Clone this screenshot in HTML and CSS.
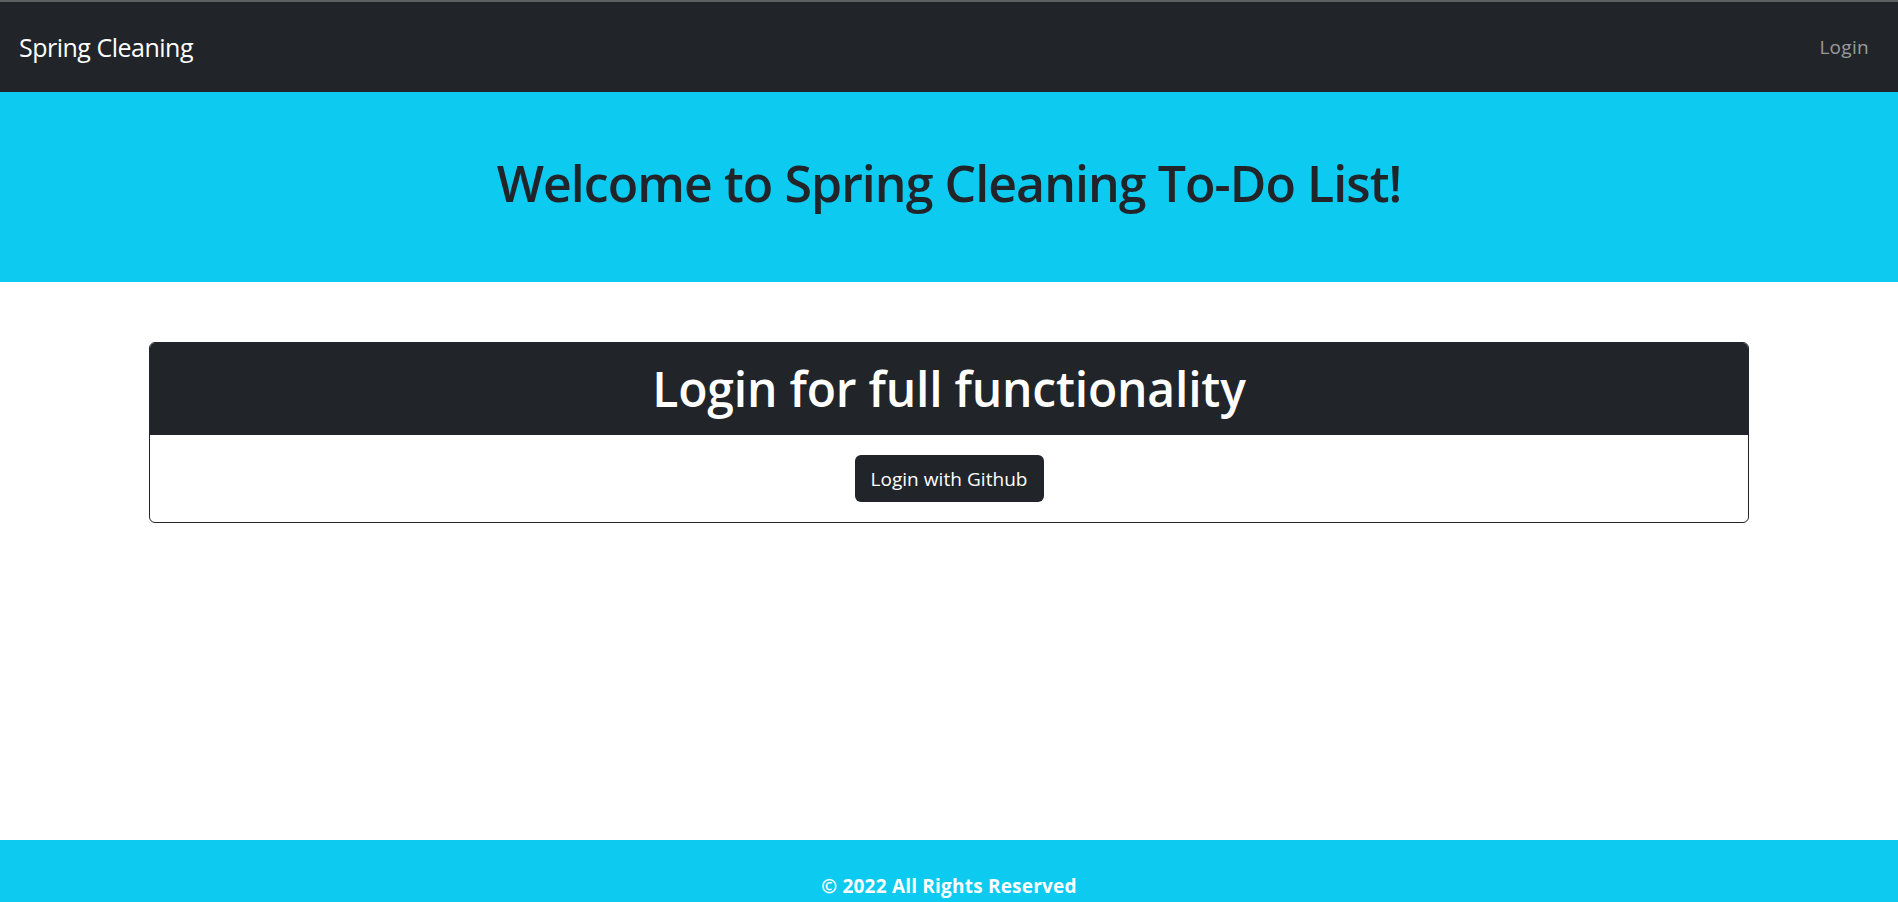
FILE: index.html
```html
<!DOCTYPE html>
<html lang="en">
<head>
<meta charset="utf-8">
<title>Spring Cleaning</title>
<link rel="stylesheet" href="styles.css">
</head>
<body>
<nav class="navbar">
  <a class="brand" href="#">Spring Cleaning</a>
  <a class="nav-link" href="#">Login</a>
</nav>
<header class="hero">
  <h1 class="hero-title">Welcome to Spring Cleaning To-Do List!</h1>
</header>
<main class="main">
  <section class="card">
    <div class="card-header">
      <h1 class="card-title">Login for full functionality</h1>
    </div>
    <div class="card-body">
      <button class="btn" type="button">Login with Github</button>
    </div>
  </section>
</main>
<footer class="footer">
  <p class="footer-text">© 2022 All Rights Reserved</p>
</footer>
</body>
</html>
```

FILE: styles.css
```css
* { box-sizing: border-box; }
html, body { margin: 0; padding: 0; }
body {
  font-family: "Open Sans", "Noto Sans", "Liberation Sans", sans-serif;
  color: #212529;
  background: #fff;
  min-height: 902px;
  display: flex;
  flex-direction: column;
}
.navbar {
  height: 92px;
  border-top: 2px solid #5f6062;
  background: #212529;
  display: flex;
  align-items: center;
  justify-content: space-between;
  padding: 0 29px 0 19px;
}
.brand {
  color: #fff;
  text-decoration: none;
  font-size: 25px;
  letter-spacing: -0.5px;
}
.nav-link {
  color: rgba(255,255,255,.55);
  text-decoration: none;
  font-size: 19px;
  letter-spacing: 0.3px;
}
.hero {
  background: #0dcaf0;
  height: 190px;
  display: flex;
  align-items: center;
  justify-content: center;
  padding-bottom: 8px;
}
.hero-title {
  margin: 0;
  font-size: 50px;
  font-weight: 600;
  letter-spacing: -0.94px;
  line-height: 1.2;
}
.main {
  flex: 1;
  padding: 60px 149px 0;
}
.card {
  border: 1px solid #212529;
  border-radius: 6px;
  overflow: hidden;
}
.card-header {
  background: #212529;
  height: 92px;
  display: flex;
  align-items: center;
  justify-content: center;
}
.card-title {
  margin: 0;
  color: #fff;
  font-size: 48px;
  font-weight: 600;
  letter-spacing: -0.2px;
  line-height: 1.2;
}
.card-body {
  display: flex;
  justify-content: center;
  padding: 20px 0 20px;
}
.btn {
  font-family: inherit;
  background: #212529;
  color: #fff;
  border: 0;
  border-radius: 6px;
  height: 47px;
  width: 189px;
  font-size: 19px;
  letter-spacing: 0.05px;
  padding: 0;
}
.footer {
  background: #0dcaf0;
  height: 62px;
  display: flex;
  justify-content: center;
}
.footer-text {
  margin: 0;
  padding-top: 37px;
  color: #fff;
  font-weight: 700;
  font-size: 19px;
  letter-spacing: 0.2px;
  line-height: 1;
}
```
